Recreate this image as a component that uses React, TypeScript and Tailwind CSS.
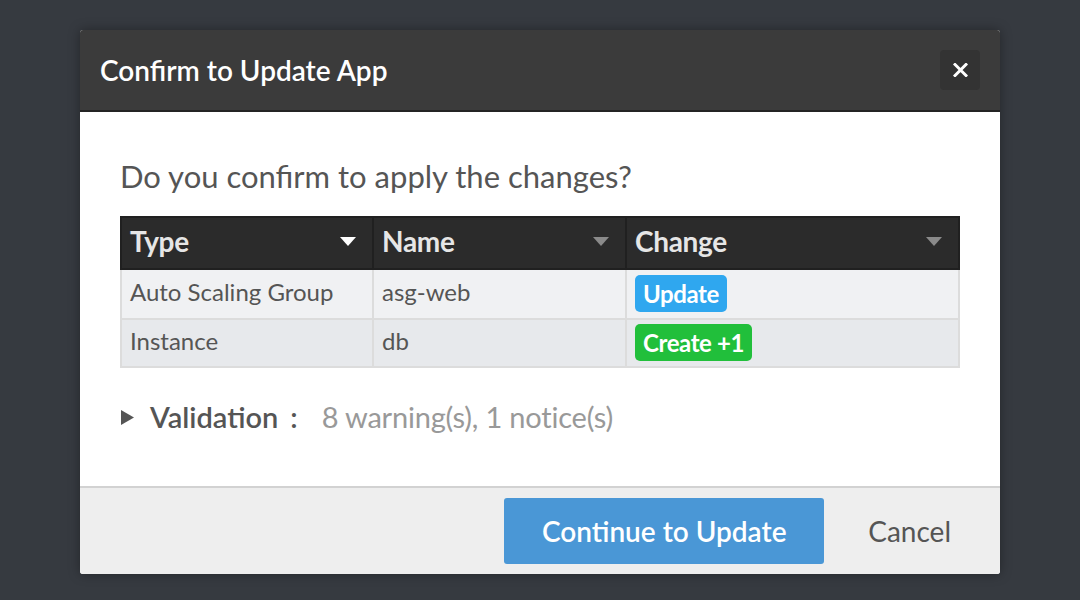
const rows = [
  { type: "Auto Scaling Group", name: "asg-web", change: "Update", color: "bg-[#2fa7ef]" },
  { type: "Instance", name: "db", change: "Create +1", color: "bg-[#21bf3b]" },
];

function SortArrow({ active }: { active?: boolean }) {
  return (
    <svg width="16" height="9" viewBox="0 0 16 9" className={active ? "text-white" : "text-[#8a8a8a]"}>
      <path d="M0 0 H16 L8 9 Z" fill="currentColor" />
    </svg>
  );
}

export default function App() {
  return (
    <div
      className="w-[1080px] h-[600px] bg-[#363a40] pt-[30px] pl-[80px] overflow-hidden"
      style={{ fontFamily: "Lato, 'Open Sans', sans-serif" }}
    >
      <div className="w-[920px] rounded-[3px] overflow-hidden bg-white shadow-[0_0_12px_rgba(0,0,0,0.35)]">
        {/* header */}
        <div className="h-[82px] bg-[#3b3b3b] border-b-2 border-[#242424] flex items-center justify-between pl-5 pr-5">
          <h2 className="text-[28px] font-semibold text-white">Confirm to Update App</h2>
          <button className="w-10 h-10 rounded bg-[#333333] flex items-center justify-center">
            <svg width="15" height="14" viewBox="0 0 15 14">
              <path d="M2 1.5 L13 12.5 M13 1.5 L2 12.5" stroke="white" strokeWidth="3" strokeLinecap="square" />
            </svg>
          </button>
        </div>

        {/* body */}
        <div className="h-[374px] pt-[48px] px-10">
          <p className="text-[31px] text-[#555] leading-8 mb-[24px]">Do you confirm to apply the changes?</p>

          <table className="w-[840px] border-collapse text-[24px] text-[#555]">
            <thead>
              <tr className="bg-[#2b2b2b] text-[#e6e6e6]">
                <th className="w-[252px] h-[52px] border-2 border-[#202020] px-2 pb-1 text-left font-bold text-[28px] tracking-[-0.3px]">
                  <div className="flex items-center justify-between pr-2">
                    <span>Type</span>
                    <SortArrow active />
                  </div>
                </th>
                <th className="w-[253px] border-2 border-[#202020] px-2 pb-1 text-left font-bold text-[28px] tracking-[-0.3px]">
                  <div className="flex items-center justify-between pr-2">
                    <span>Name</span>
                    <SortArrow />
                  </div>
                </th>
                <th className="border-2 border-[#202020] px-2 pb-1 text-left font-bold text-[28px] tracking-[-0.3px]">
                  <div className="flex items-center justify-between pr-2">
                    <span>Change</span>
                    <SortArrow />
                  </div>
                </th>
              </tr>
            </thead>
            <tbody>
              {rows.map((r, i) => (
                <tr key={r.name} className={i === 0 ? "bg-[#f0f1f3]" : "bg-[#e7e9ec]"}>
                  <td className={`${i === 0 ? "h-[50px]" : "h-[48px]"} border-2 border-[#dcdcdc] px-2 pb-1`}>{r.type}</td>
                  <td className="border-2 border-[#dcdcdc] px-2 pb-1">{r.name}</td>
                  <td className="border-2 border-[#dcdcdc] px-2 pb-[2px]">
                    <span
                      className={`inline-block ${r.color} text-white font-bold text-[24px] rounded-[5px] px-2 leading-[37px] tracking-[-0.4px]`}
                    >
                      {r.change}
                    </span>
                  </td>
                </tr>
              ))}
            </tbody>
          </table>

          <div className="flex items-center mt-[28px] text-[29px] leading-[42px]">
            <svg width="13" height="15" viewBox="0 0 13 15" className="ml-[1px] mr-4">
              <path d="M0 0 L13 7.5 L0 15 Z" fill="#555" />
            </svg>
            <span className="font-semibold text-[#555]">Validation</span>
            <span className="font-semibold text-[#555] ml-3">:</span>
            <span className="text-[#999] ml-[24px] tracking-[-0.2px]">8 warning(s), 1 notice(s)</span>
          </div>
        </div>

        {/* footer */}
        <div className="h-[88px] bg-[#eeeeee] border-t-2 border-[#d2d2d2] flex items-center justify-end pr-[49px]">
          <button className="w-[320px] h-[66px] rounded-[3px] bg-[#4a97d6] text-white text-[28px] font-semibold">
            Continue to Update
          </button>
          <button className="ml-[44px] text-[28px] text-[#555]">Cancel</button>
        </div>
      </div>
    </div>
  );
}
